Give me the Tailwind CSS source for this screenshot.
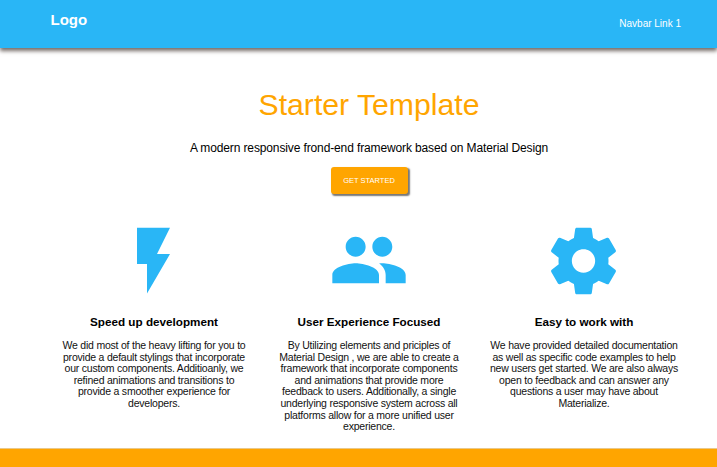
<!DOCTYPE html>
<html lang="en"><head><meta charset="utf-8"><title>Starter Template</title>
<script src="https://cdn.jsdelivr.net/npm/@tailwindcss/browser@4"></script></head>
<body class="h-[467px] overflow-hidden bg-white font-['Liberation_Sans',Arial,sans-serif] text-black flex flex-col">
<nav class="h-12 shrink-0 bg-[#29b6f6] flex justify-between text-white pl-[50.5px] pr-[36px] shadow-[0_3px_4px_0_#766d69]">
<a class="text-[15px] leading-[18px] font-bold pt-[11px]">Logo</a>
<a class="text-[10px] leading-3 pt-[18px]">Navbar Link 1</a>
</nav>
<header class="flex flex-col items-center pl-[21px] shrink-0 h-[172px]">
<h1 class="text-[30.2px] leading-9 text-[#ffa500] mt-[39px]">Starter Template</h1>
<p class="text-[12px] tracking-[-0.125px] leading-4 mt-[17px]">A modern responsive frond-end framework based on Material Design</p>
<button class="mt-[11px] w-[77px] h-[27px] shrink-0 rounded-[3px] bg-[#ffa500] text-white text-[7.5px] shadow-[1.5px_1.5px_1.5px_0_#777]">GET STARTED</button>
</header>
<main class="grid grid-cols-[188px_188px_188px] gap-x-[27px] pl-[60px] grow whitespace-nowrap">
<section class="text-center"><svg class="w-[188px] h-20 mt-px" viewBox="0 0 188 80" fill="#29b6f6"><path d="M77 6.7V43h10v29.5L110 33H97l13-26.3z"/></svg>
<h2 class="text-[11.7px] leading-4 font-bold mt-[13px]">Speed up development</h2><p class="text-[10.5px] tracking-[-0.22px] text-[#111] leading-[11.6px] mt-[10px]">We did most of the heavy lifting for you to<br>provide a default stylings that incorporate<br>our custom components. Additioanly, we<br>refined animations and transitions to<br>provide a smoother experience for<br>developers.</p></section>
<section class="text-center"><svg class="w-20 h-20 mx-auto mt-px" viewBox="0 .3 24 24" fill="#29b6f6"><path d="M16 11c1.66 0 2.99-1.34 2.99-3S17.66 5 16 5s-3 1.34-3 3 1.34 3 3 3zm-8 0c1.66 0 2.99-1.34 2.99-3S9.66 5 8 5 5 6.34 5 8s1.34 3 3 3zm0 2c-2.33 0-7 1.17-7 3.5V19h14v-2.5c0-2.33-4.67-3.5-7-3.5zm8 0c-.29 0-.62.02-.97.05 1.16.84 1.97 1.97 1.97 3.45V19h6v-2.5c0-2.33-4.67-3.5-7-3.5z"/></svg>
<h2 class="text-[11.7px] leading-4 font-bold mt-[13px]">User Experience Focused</h2><p class="text-[10.5px] tracking-[-0.22px] text-[#111] leading-[11.6px] mt-[10px]">By Utilizing elements and priciples of<br>Material Design , we are able to create a<br>framework that incorporate components<br>and animations that provide more<br>feedback to users. Additionally, a single<br>underlying responsive system across all<br>platforms allow for a more unified user<br>experience.</p></section>
<section class="text-center"><svg class="w-20 h-20 mx-auto mt-px" viewBox=".15 0 24 24" fill="#29b6f6"><path d="M19.43 12.98c.04-.32.07-.64.07-.98s-.03-.66-.07-.98l2.11-1.65c.19-.15.24-.42.12-.64l-2-3.46c-.12-.22-.39-.3-.61-.22l-2.49 1c-.52-.4-1.08-.73-1.69-.98l-.38-2.65A.488.488 0 0 0 14 2h-4c-.25 0-.46.18-.49.42l-.38 2.65c-.61.25-1.17.59-1.69.98l-2.49-1c-.23-.09-.49 0-.61.22l-2 3.46c-.13.22-.07.49.12.64l2.11 1.65c-.04.32-.07.65-.07.98s.03.66.07.98l-2.11 1.65c-.19.15-.24.42-.12.64l2 3.46c.12.22.39.3.61.22l2.49-1c.52.4 1.08.73 1.69.98l.38 2.65c.03.24.24.42.49.42h4c.25 0 .46-.18.49-.42l.38-2.65c.61-.25 1.17-.59 1.69-.98l2.49 1c.23.09.49 0 .61-.22l2-3.46c.12-.22.07-.49-.12-.64l-2.11-1.65zM12 15.5c-1.93 0-3.5-1.57-3.5-3.5s1.57-3.5 3.5-3.5 3.5 1.57 3.5 3.5-1.57 3.5-3.5 3.5z"/></svg>
<h2 class="text-[11.7px] leading-4 font-bold mt-[13px]">Easy to work with</h2><p class="text-[10.5px] tracking-[-0.22px] text-[#111] leading-[11.6px] mt-[10px]">We have provided detailed documentation<br>as well as specific code examples to help<br>new users get started. We are also always<br>open to feedback and can answer any<br>questions a user may have about<br>Materialize.</p></section>
</main>
<footer class="h-[19px] shrink-0 bg-[#ffa500] border-t border-[#e8c88c]"></footer>
</body></html>
